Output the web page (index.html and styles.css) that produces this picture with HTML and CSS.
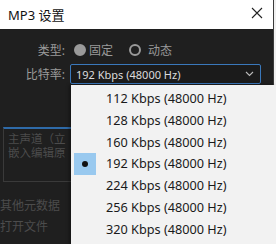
FILE: index.html
```html
<!DOCTYPE html>
<html lang="zh-CN">
<head>
    <meta charset="UTF-8">
    <meta name="viewport" content="width=device-width, initial-scale=1.0">
    <title>MP3 设置</title>
    <link rel="stylesheet" href="styles.css">
</head>
<body>
<div class="dialog">
    <header class="titlebar">
        <span class="title">MP3 设置</span>
        <button class="close-button" aria-label="关闭">
            <svg width="12" height="12" viewBox="0 0 12 12">
                <path d="M1 1 L11 11 M11 1 L1 11" stroke="#222" stroke-width="1.1" fill="none"/>
            </svg>
        </button>
    </header>

    <main class="content">
        <div class="field-row">
            <span class="field-label">类型:</span>
            <label class="radio checked"><span class="radio-mark"></span>固定</label>
            <label class="radio"><span class="radio-mark"></span>动态</label>
        </div>

        <div class="field-row">
            <span class="field-label">比特率:</span>
            <div class="select">
                <span>192 Kbps (48000 Hz)</span>
                <svg width="9" height="6" viewBox="0 0 9 6">
                    <path d="M1 1 L4.5 4.5 L8 1" stroke="#bbb" stroke-width="1.1" fill="none"/>
                </svg>
            </div>
        </div>

        <div class="channel-box">
            <div class="channel-line">主声道（立</div>
            <div class="channel-line">嵌入编辑原</div>
        </div>

        <div class="meta-line">其他元数据</div>
        <div class="meta-line">打开文件</div>

        <ul class="options">
            <li>112 Kbps (48000 Hz)</li>
            <li>128 Kbps (48000 Hz)</li>
            <li>160 Kbps (48000 Hz)</li>
            <li class="selected">192 Kbps (48000 Hz)</li>
            <li>224 Kbps (48000 Hz)</li>
            <li>256 Kbps (48000 Hz)</li>
            <li>320 Kbps (48000 Hz)</li>
        </ul>
    </main>
</div>
</body>
</html>
```

FILE: styles.css
```css
:root {
    --dark: #1f1f1f;
    --label: #9a9a9a;
    --dim: #4c4c4c;
    --accent: #3a78bb;
    --menu: #f2f2f2;
    --menu-text: #1a1a1a;
    --bullet: #99c9ef;
}

* {
    margin: 0;
    padding: 0;
    box-sizing: border-box;
}

body {
    font-family: "Noto Sans", "Noto Sans CJK SC", sans-serif;
    background-color: #f0f0f0;
    width: 276px;
    height: 244px;
    overflow: hidden;
}

.dialog {
    width: 274px;
    height: 244px;
    background-color: var(--dark);
    border-right: 1px solid #3a3a3a;
}

.titlebar {
    height: 29px;
    background-color: #ffffff;
    display: flex;
    align-items: center;
    justify-content: space-between;
    padding: 0 10px 1px 8px;
}

.title {
    font-size: 13px;
    color: #111;
}

.close-button {
    border: none;
    background: none;
    display: flex;
    align-items: center;
    margin-bottom: 2px;
}

.content {
    position: relative;
    padding-top: 11px;
}

.field-row {
    display: flex;
    align-items: center;
    height: 20px;
    margin-bottom: 4px;
}

.field-label {
    width: 67px;
    text-align: right;
    font-size: 12px;
    color: var(--label);
    padding-right: 2px;
}

.radio {
    display: flex;
    align-items: center;
    font-size: 12px;
    color: var(--label);
    margin-left: 7px;
}

.radio + .radio {
    margin-left: 16px;
}

.radio-mark {
    width: 12px;
    height: 12px;
    border-radius: 50%;
    border: 2px solid var(--label);
    margin-right: 7px;
}

.radio.checked .radio-mark {
    background-color: var(--label);
    margin-right: 3px;
}

.select {
    width: 191px;
    height: 20px;
    margin-left: 3px;
    border: 1px solid var(--accent);
    border-radius: 2px;
    background-color: #1b1b1b;
    display: flex;
    align-items: center;
    justify-content: space-between;
    padding: 0 6px 0 5px;
    font-size: 11px;
    color: #dcdcdc;
}

.channel-box {
    width: 68px;
    margin: 43px 0 0 3px;
    height: 55px;
    border: 1px solid #3a3a3a;
    border-right: none;
    border-top: 2px solid #2e6aa8;
    padding: 3px 0 0 4px;
    color: var(--dim);
    white-space: nowrap;
    overflow: hidden;
}

.channel-line {
    height: 14px;
    font-size: 11.5px;
    line-height: 14px;
}

.meta-line {
    font-size: 12px;
    line-height: 21px;
    color: var(--dim);
    white-space: nowrap;
}

.channel-box + .meta-line {
    margin-top: 13px;
}

.options {
    position: absolute;
    top: 56px;
    left: 71px;
    width: 205px;
    height: 160px;
    list-style: none;
    background-color: var(--menu);
    padding-top: 3px;
    box-shadow: -2px 0 3px rgba(0, 0, 0, 0.35);
}

.options li {
    position: relative;
    height: 21.8px;
    line-height: 21.8px;
    padding-left: 35px;
    font-size: 12.7px;
    color: var(--menu-text);
}

.options li.selected::before {
    content: "";
    position: absolute;
    left: 3px;
    top: 0;
    width: 22px;
    height: 22px;
    background-color: var(--bullet);
}

.options li.selected::after {
    content: "";
    position: absolute;
    left: 11px;
    top: 8px;
    width: 6px;
    height: 6px;
    border-radius: 50%;
    background-color: #111;
}
```
